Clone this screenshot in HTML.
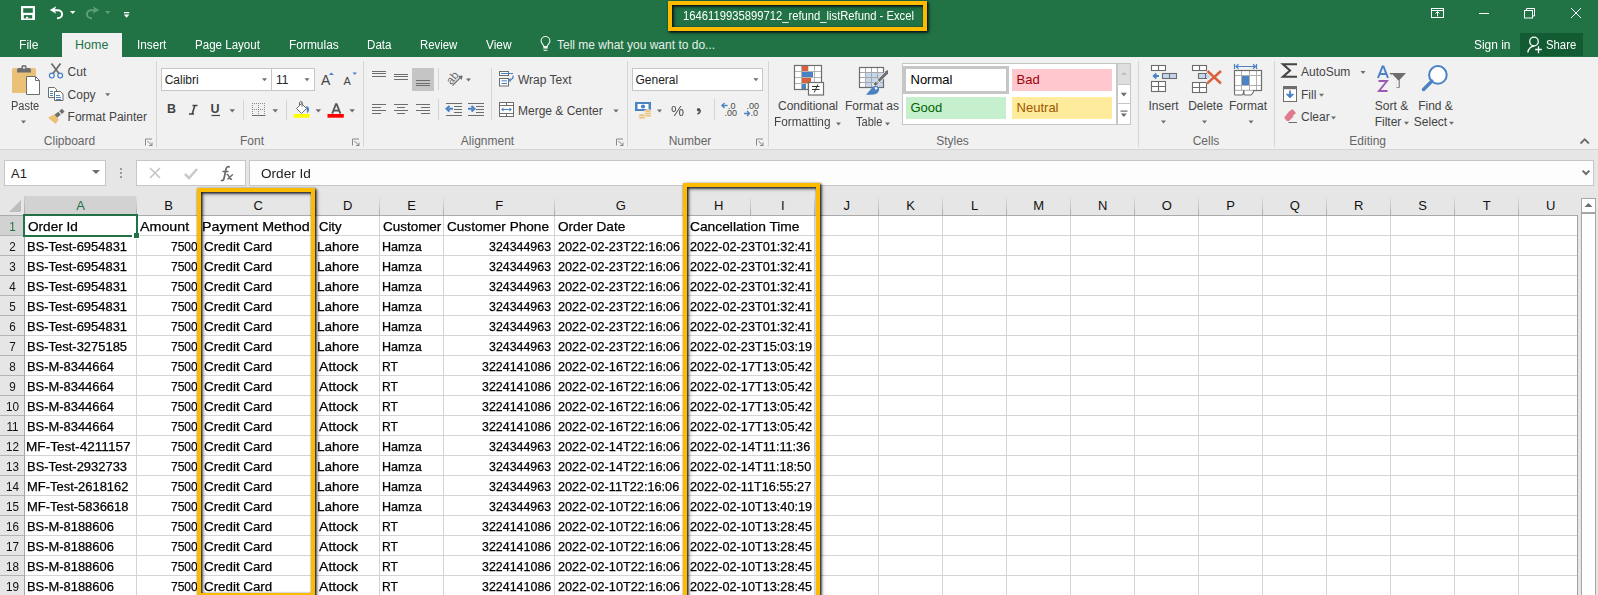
<!DOCTYPE html><html><head><meta charset="utf-8"><style>
*{box-sizing:border-box;margin:0;padding:0}
html,body{width:1598px;height:595px;overflow:hidden;background:#e6e6e6;font-family:"Liberation Sans",sans-serif;position:relative}
.a{position:absolute}
.t{position:absolute;white-space:nowrap;line-height:1;transform-origin:0 0}
.gv{position:absolute;width:1px;background:#d4d4d4}
.gh{position:absolute;height:1px;background:#d4d4d4}
.rb{font-size:12px;color:#444}
</style></head><body><div class="a" style="left:0;top:0;width:1598px;height:57px;background:#217346"></div>
<div class="a" style="left:62px;top:33px;width:60px;height:25px;background:#f1f1f1"></div>
<svg class="a" style="left:0;top:0" width="140" height="30" viewBox="0 0 140 30">
<rect x="21" y="6" width="14" height="14" rx="0.6" fill="#fff"/>
<rect x="23.2" y="8.2" width="9.6" height="4.6" fill="#217346"/>
<rect x="23.8" y="15.1" width="8.4" height="3.3" fill="#217346"/>
<rect x="26" y="16.8" width="2.2" height="1.6" fill="#fff"/>
<path d="M49.8 10l6.4-3.8-1.6 3.8 1.6 3.8z" fill="#fff"/>
<path d="M54 10.2h3.5a4.6 4 0 0 1 0 8h-0.5" fill="none" stroke="#fff" stroke-width="2"/>
<path d="M70 11h5.4l-2.7 3z" fill="#fff"/>
<path d="M99.2 10l-6.4-3.8 1.6 3.8-1.6 3.8z" fill="#5e9e7b"/>
<path d="M95 10.2h-3.5a4.6 4 0 0 0 0 8h0.5" fill="none" stroke="#5e9e7b" stroke-width="2"/>
<path d="M105 11h5.4l-2.7 3z" fill="#5e9e7b"/>
<rect x="124" y="12" width="5.2" height="1.3" fill="#fff"/>
<path d="M123.8 14.4h5.6l-2.8 3.4z" fill="#fff"/>
</svg>
<div class="t" style="left:683.00px;top:10.22px;font-size:12.5px;color:#fff;font-weight:normal;transform:scaleX(0.8990);">1646119935899712_refund_listRefund - Excel</div>
<svg class="a" style="left:1420px;top:0" width="178" height="30" viewBox="0 0 178 30">
<g fill="none" stroke="#fff" stroke-width="1">
<rect x="11.5" y="8.5" width="12" height="9"/>
<path d="M11.5 10.5h12"/>
<path d="M17.5 16.5v-4.5M15.5 13.5l2-2 2 2"/>
<path d="M59 13.5h10"/>
<rect x="104.5" y="10.5" width="8" height="7.5"/>
<path d="M106.5 10.5v-2h8v7.5h-2"/>
<path d="M151 8l10 10M161 8l-10 10"/>
</g></svg>
<div class="t" style="left:19.00px;top:39.42px;font-size:12.5px;color:#fff;font-weight:normal;transform:scaleX(0.9700);">File</div>
<div class="t" style="left:75.00px;top:38.72px;font-size:12.5px;color:#217346;font-weight:normal;">Home</div>
<div class="t" style="left:137.00px;top:38.72px;font-size:12.5px;color:#fff;font-weight:normal;transform:scaleX(0.9400);">Insert</div>
<div class="t" style="left:195.00px;top:38.72px;font-size:12.5px;color:#fff;font-weight:normal;transform:scaleX(0.9250);">Page Layout</div>
<div class="t" style="left:289.00px;top:38.72px;font-size:12.5px;color:#fff;font-weight:normal;transform:scaleX(0.9550);">Formulas</div>
<div class="t" style="left:367.00px;top:38.72px;font-size:12.5px;color:#fff;font-weight:normal;transform:scaleX(0.9300);">Data</div>
<div class="t" style="left:420.00px;top:38.72px;font-size:12.5px;color:#fff;font-weight:normal;transform:scaleX(0.9100);">Review</div>
<div class="t" style="left:486.00px;top:38.72px;font-size:12.5px;color:#fff;font-weight:normal;transform:scaleX(0.9500);">View</div>
<svg class="a" style="left:539px;top:36px" width="14" height="16" viewBox="0 0 14 16"><g fill="none" stroke="#eef4f0" stroke-width="1.1"><path d="M4.8 10.5c0-2-2.7-3-2.7-5.6a4.4 4.4 0 0 1 8.8 0c0 2.6-2.7 3.6-2.7 5.6z"/></g><rect x="4.3" y="10.6" width="4.4" height="2" fill="#eef4f0"/><rect x="4.6" y="13.8" width="3.8" height="1.1" fill="#eef4f0"/></svg>
<div class="t" style="left:557.00px;top:38.84px;font-size:12px;color:#e6efe9;font-weight:normal;">Tell me what you want to do...</div>
<div class="t" style="left:1474.00px;top:38.72px;font-size:12.5px;color:#fff;font-weight:normal;transform:scaleX(0.9550);">Sign in</div>
<div class="a" style="left:1520px;top:33px;width:63px;height:23px;background:#135c33"></div>
<svg class="a" style="left:1525px;top:35px" width="18" height="20" viewBox="0 0 18 20"><g fill="none" stroke="#fff" stroke-width="1.3"><circle cx="9" cy="6.5" r="4.3"/><path d="M2.8 17.5c0.6-3.5 3-6 6.5-6.3"/><path d="M10.2 14.5h6.6M13.5 11.3v7"/></g></svg>
<div class="t" style="left:1546.00px;top:38.72px;font-size:12.5px;color:#fff;font-weight:normal;transform:scaleX(0.9050);">Share</div>
<div class="a" style="left:0;top:57px;width:1598px;height:92px;background:#f1f1f1"></div>
<div class="a" style="left:0;top:149px;width:1598px;height:1px;background:#d5d5d5"></div>
<div class="a" style="left:156px;top:61px;width:1px;height:86px;background:#d5d5d5"></div>
<div class="a" style="left:363px;top:61px;width:1px;height:86px;background:#d5d5d5"></div>
<div class="a" style="left:627px;top:61px;width:1px;height:86px;background:#d5d5d5"></div>
<div class="a" style="left:768px;top:61px;width:1px;height:86px;background:#d5d5d5"></div>
<div class="a" style="left:1138px;top:61px;width:1px;height:86px;background:#d5d5d5"></div>
<div class="a" style="left:1274px;top:61px;width:1px;height:86px;background:#d5d5d5"></div>
<div class="t" style="left:9.5px;width:120px;text-align:center;top:134.84px;font-size:12px;color:#666">Clipboard</div>
<div class="t" style="left:192px;width:120px;text-align:center;top:134.84px;font-size:12px;color:#666">Font</div>
<div class="t" style="left:427.5px;width:120px;text-align:center;top:134.84px;font-size:12px;color:#666">Alignment</div>
<div class="t" style="left:630px;width:120px;text-align:center;top:134.84px;font-size:12px;color:#666">Number</div>
<div class="t" style="left:892.5px;width:120px;text-align:center;top:134.84px;font-size:12px;color:#666">Styles</div>
<div class="t" style="left:1146px;width:120px;text-align:center;top:134.84px;font-size:12px;color:#666">Cells</div>
<div class="t" style="left:1307.7px;width:120px;text-align:center;top:134.84px;font-size:12px;color:#666">Editing</div>
<svg class="a" style="left:0;top:0" width="1598" height="150" viewBox="0 0 1598 150"><rect x="12" y="68" width="24" height="25" rx="1.5" fill="#ebc178"/><path d="M17 72.5v-2.5a2 2 0 0 1 2-2h2.5v-1.5a1.2 1.2 0 0 1 1.2-1.2h2.6a1.2 1.2 0 0 1 1.2 1.2v1.5h2.5a2 2 0 0 1 2 2v2.5z" fill="#6d6d6d"/><rect x="23" y="66.8" width="2.2" height="1.8" fill="#f1f1f1"/><path d="M26.5 76.5h9l4 4v14h-13z" fill="#fff" stroke="#6d6d6d" stroke-width="1"/><path d="M35.5 76.5v4h4" fill="none" stroke="#6d6d6d" stroke-width="1"/><path d="M21 120.5h5l-2.5 3.0z" fill="#6d6d6d"/><path d="M105.2 93.2h5l-2.5 3.0z" fill="#6d6d6d"/><path d="M51.5 63.5l7.5 10M60.5 63.5l-7.5 10" stroke="#6d6d6d" stroke-width="1.8" fill="none"/><circle cx="51.8" cy="75.6" r="2.4" fill="none" stroke="#4b82c4" stroke-width="1.2"/><circle cx="60.2" cy="75.6" r="2.4" fill="none" stroke="#4b82c4" stroke-width="1.2"/><path d="M48.5 87.5h6l2 2v8h-8z" fill="#fff" stroke="#6d6d6d"/><path d="M54.5 91.5h6l2.5 2.5v6.5h-8.5z" fill="#fff" stroke="#6d6d6d"/><path d="M50 91.5h3M50 93.5h3M50 95.5h3M56 95.5h4M56 97.5h5M56 99.5h5" stroke="#4b82c4" stroke-width="1"/><path d="M55.5 116.5l4-3.2M60.5 112.5l2.8-2.2" stroke="#6d6d6d" stroke-width="4" fill="none"/><path d="M48 117.8l6.3-3.6 4.6 5.3-3.2 4.6z" fill="#ebc178"/><rect x="161.5" y="68.5" width="110" height="22" fill="#fff" stroke="#c6c6c6"/><rect x="271.5" y="68.5" width="43" height="22" fill="#fff" stroke="#c6c6c6"/><path d="M262 78.2h5l-2.5 3.0z" fill="#6d6d6d"/><path d="M304.5 78.2h5l-2.5 3.0z" fill="#6d6d6d"/><path d="M328.8 75h5.2l-2.6-2.6z" fill="#4b82c4"/><path d="M352.5 72.5h4.4l-2.2 2.6z" fill="#4b82c4"/><path d="M243.5 99.5v21M286.5 99.5v21" stroke="#d5d5d5"/><path d="M229.5 109.2h5.5l-2.75 3.3z" fill="#6d6d6d"/><path d="M272.5 109.2h5.5l-2.75 3.3z" fill="#6d6d6d"/><path d="M315.6 109.2h5.5l-2.75 3.3z" fill="#6d6d6d"/><path d="M349.4 109.2h5.5l-2.75 3.3z" fill="#6d6d6d"/><path d="M211.5 115.5h8.5" stroke="#444" stroke-width="1.2"/><rect x="252" y="103" width="1" height="1" fill="#8a8a8a"/><rect x="252" y="109" width="1" height="1" fill="#8a8a8a"/><rect x="254" y="103" width="1" height="1" fill="#8a8a8a"/><rect x="254" y="109" width="1" height="1" fill="#8a8a8a"/><rect x="256" y="103" width="1" height="1" fill="#8a8a8a"/><rect x="256" y="109" width="1" height="1" fill="#8a8a8a"/><rect x="258" y="103" width="1" height="1" fill="#8a8a8a"/><rect x="258" y="109" width="1" height="1" fill="#8a8a8a"/><rect x="260" y="103" width="1" height="1" fill="#8a8a8a"/><rect x="260" y="109" width="1" height="1" fill="#8a8a8a"/><rect x="262" y="103" width="1" height="1" fill="#8a8a8a"/><rect x="262" y="109" width="1" height="1" fill="#8a8a8a"/><rect x="264" y="103" width="1" height="1" fill="#8a8a8a"/><rect x="264" y="109" width="1" height="1" fill="#8a8a8a"/><rect x="252" y="103" width="1" height="1" fill="#8a8a8a"/><rect x="258" y="103" width="1" height="1" fill="#8a8a8a"/><rect x="264" y="103" width="1" height="1" fill="#8a8a8a"/><rect x="252" y="105" width="1" height="1" fill="#8a8a8a"/><rect x="258" y="105" width="1" height="1" fill="#8a8a8a"/><rect x="264" y="105" width="1" height="1" fill="#8a8a8a"/><rect x="252" y="107" width="1" height="1" fill="#8a8a8a"/><rect x="258" y="107" width="1" height="1" fill="#8a8a8a"/><rect x="264" y="107" width="1" height="1" fill="#8a8a8a"/><rect x="252" y="109" width="1" height="1" fill="#8a8a8a"/><rect x="258" y="109" width="1" height="1" fill="#8a8a8a"/><rect x="264" y="109" width="1" height="1" fill="#8a8a8a"/><rect x="252" y="111" width="1" height="1" fill="#8a8a8a"/><rect x="258" y="111" width="1" height="1" fill="#8a8a8a"/><rect x="264" y="111" width="1" height="1" fill="#8a8a8a"/><rect x="252" y="113" width="1" height="1" fill="#8a8a8a"/><rect x="258" y="113" width="1" height="1" fill="#8a8a8a"/><rect x="264" y="113" width="1" height="1" fill="#8a8a8a"/><path d="M252 115.5h13.5" stroke="#6d6d6d" stroke-width="1"/><path d="M296.5 108.5l5-5 5 5-5 5z" fill="#fff" stroke="#6d6d6d" stroke-width="1"/><path d="M299.5 106v-3a1.4 1.4 0 0 1 2.8 0l0.3 0.6M302 103.2v3.6" fill="none" stroke="#6d6d6d" stroke-width="1"/><path d="M306.2 106c2.6 0.4 4.4 3.2 1.2 7.4l-0.6-3z" fill="#4b82c4"/><rect x="293.7" y="114" width="16" height="3.7" fill="#ffff00"/><rect x="327.5" y="114" width="16.3" height="3.7" fill="#ff0000"/><rect x="372" y="71" width="14" height="1" fill="#6d6d6d"/><rect x="372" y="73" width="14" height="1" fill="#6d6d6d"/><rect x="372" y="76" width="14" height="1" fill="#6d6d6d"/><rect x="394" y="74" width="14" height="1" fill="#6d6d6d"/><rect x="394" y="76" width="14" height="1" fill="#6d6d6d"/><rect x="394" y="79" width="14" height="1" fill="#6d6d6d"/><rect x="412" y="68" width="22" height="23" fill="#c5c5c5"/><rect x="416" y="80" width="14" height="1" fill="#6d6d6d"/><rect x="416" y="83" width="14" height="1" fill="#6d6d6d"/><rect x="416" y="85" width="14" height="1" fill="#6d6d6d"/><rect x="372" y="104" width="14" height="1" fill="#6d6d6d"/><rect x="372" y="107" width="9" height="1" fill="#6d6d6d"/><rect x="372" y="110" width="14" height="1" fill="#6d6d6d"/><rect x="372" y="113" width="9" height="1" fill="#6d6d6d"/><rect x="394" y="104" width="14" height="1" fill="#6d6d6d"/><rect x="397" y="107" width="8" height="1" fill="#6d6d6d"/><rect x="394" y="110" width="14" height="1" fill="#6d6d6d"/><rect x="397" y="113" width="8" height="1" fill="#6d6d6d"/><rect x="416" y="104" width="14" height="1" fill="#6d6d6d"/><rect x="421" y="107" width="9" height="1" fill="#6d6d6d"/><rect x="416" y="110" width="14" height="1" fill="#6d6d6d"/><rect x="421" y="113" width="9" height="1" fill="#6d6d6d"/><path d="M438.5 68v22M438.5 99v21M491.5 68v52" stroke="#d5d5d5"/><text x="446" y="82" font-size="11.5" fill="#6d6d6d" font-family="Liberation Sans" transform="rotate(-50 452 78)">ab</text><path d="M452.5 85.5l9-9" stroke="#6d6d6d" stroke-width="1.1" fill="none"/><path d="M462.5 75.5l-4.5 0.6 3.9 3.9z" fill="#6d6d6d"/><path d="M466 78.5h5l-2.5 3.0z" fill="#6d6d6d"/><rect x="446" y="103" width="16" height="1" fill="#6d6d6d"/><rect x="446" y="115" width="16" height="1" fill="#6d6d6d"/><rect x="454" y="106" width="8" height="1" fill="#6d6d6d"/><rect x="454" y="109" width="8" height="1" fill="#6d6d6d"/><rect x="454" y="112" width="8" height="1" fill="#6d6d6d"/><path d="M453 108.8h-4.5M449.5 106l-3 2.8 3 2.8" stroke="#4b82c4" stroke-width="2" fill="none"/><rect x="468" y="103" width="16" height="1" fill="#6d6d6d"/><rect x="468" y="115" width="16" height="1" fill="#6d6d6d"/><rect x="476" y="106" width="8" height="1" fill="#6d6d6d"/><rect x="476" y="109" width="8" height="1" fill="#6d6d6d"/><rect x="476" y="112" width="8" height="1" fill="#6d6d6d"/><path d="M468 108.8h4.5M471.5 106l3 2.8-3 2.8" stroke="#4b82c4" stroke-width="2" fill="none"/><rect x="499.5" y="71.5" width="9" height="4" fill="#fff" stroke="#6d6d6d"/><rect x="499.5" y="78.5" width="9" height="7.5" fill="#fff" stroke="#6d6d6d"/><path d="M501 73.5h12M501.5 80.8h5.5M501.5 83.5h5.5" stroke="#4b82c4" stroke-width="1" fill="none"/><path d="M513 75.5c0.5 2.5-1 4.5-4 4.8" stroke="#4b82c4" stroke-width="1.2" fill="none"/><path d="M508 80.3l2.6-2.2v4.2z" fill="#4b82c4"/><rect x="499.5" y="102.5" width="14" height="14" fill="#fff" stroke="#6d6d6d"/><path d="M499.5 105.5h14M499.5 113.5h14M506.5 102.5v3M506.5 113.5v3" stroke="#6d6d6d" fill="none"/><path d="M502 109.5h9" stroke="#4b82c4" stroke-width="1" fill="none"/><path d="M501 109.5l2.5-2v4zM512 109.5l-2.5-2v4z" fill="#4b82c4"/><path d="M613.4 109.5h5.2l-2.6 3.12z" fill="#6d6d6d"/><rect x="632.5" y="68.5" width="130" height="22" fill="#fff" stroke="#c6c6c6"/><path d="M753.4 78.2h5l-2.5 3.0z" fill="#6d6d6d"/><rect x="635" y="102" width="16" height="9" fill="#4b82c4"/><path d="M637.5 104h11v5h-11z" fill="#fff"/><circle cx="643" cy="106.5" r="2.1" fill="#4b82c4"/><g fill="#ebc178" stroke="#f1f1f1" stroke-width="0.7"><ellipse cx="648" cy="115.5" rx="3.3" ry="1.5"/><ellipse cx="648" cy="113.3" rx="3.3" ry="1.5"/><ellipse cx="648" cy="111" rx="3.3" ry="1.5"/><ellipse cx="642" cy="117.6" rx="3.3" ry="1.5"/><ellipse cx="642" cy="115.3" rx="3.3" ry="1.5"/></g><path d="M657 109.5h5l-2.5 3.0z" fill="#6d6d6d"/><path d="M714.5 99v21" stroke="#d5d5d5"/><path d="M722 105.5h5.5M724.5 103l-2.5 2.5 2.5 2.5M744 113.5h5.5M747 111l2.5 2.5-2.5 2.5" stroke="#4b82c4" stroke-width="1.4" fill="none"/><text x="728" y="109" font-size="9" fill="#4a4a4a" font-family="Liberation Sans">.0</text><text x="724.5" y="116" font-size="9" fill="#4a4a4a" font-family="Liberation Sans">.00</text><text x="746.5" y="109" font-size="9" fill="#4a4a4a" font-family="Liberation Sans">.00</text><text x="750.5" y="116" font-size="9" fill="#4a4a4a" font-family="Liberation Sans">.0</text><rect x="794.5" y="65.5" width="27" height="24" fill="#fff"/><path d="M801.5 65.5v24M808 65.5v24M814.5 65.5v24M794.5 71.5h27M794.5 77.5h27M794.5 83.5h27" stroke="#b4b4b4" stroke-width="1" fill="none"/><rect x="802" y="66" width="6" height="5" fill="#d9603b"/><rect x="802" y="72" width="11" height="5" fill="#4b82c4"/><rect x="802" y="78" width="9" height="5" fill="#d9603b"/><rect x="802" y="84" width="4" height="5" fill="#4b82c4"/><rect x="794.5" y="65.5" width="27" height="24" fill="none" stroke="#6d6d6d" stroke-width="1.2"/><rect x="808.5" y="82.5" width="15" height="12.5" fill="#fff" stroke="#6d6d6d" stroke-width="1.2"/><path d="M812 86.5h7.5M812 89.5h7.5M817.8 84.5l-3.6 8" stroke="#333" stroke-width="1" fill="none"/><rect x="859.5" y="67.5" width="24" height="20" fill="#fff"/><rect x="865.5" y="72.5" width="18" height="15" fill="#c5d7ee"/><path d="M865.5 67.5v20M871.5 67.5v20M877.5 67.5v20M859.5 72.5h24M859.5 77.5h24M859.5 82.5h24" stroke="#a8a8a8" stroke-width="1" fill="none"/><rect x="859.5" y="67.5" width="24" height="20" fill="none" stroke="#6d6d6d" stroke-width="1.2"/><path d="M873.5 86l3-3M878 81.5l9-9" stroke="#f1f1f1" stroke-width="4.5" fill="none"/><path d="M874.5 85l2.2-2.2M878.5 81l8.5-8.5" stroke="#6d6d6d" stroke-width="3" fill="none"/><path d="M885 71.5l3-1.5v4.5z" fill="#6d6d6d"/><path d="M866 94.8l6.5-7.5c1.6-1.8 4.4-1.8 5.8 0 1.4 1.6 1 4-0.8 5.6-2.4 2-6 2-11.5 1.9z" fill="#4b82c4"/><path d="M874.5 87.8c1.2-0.8 2.6-0.4 3 0.6l-1.6 1.6z" fill="#fff"/><rect x="902.5" y="63.5" width="214" height="61" fill="#fff" stroke="#c6c6c6"/><rect x="904.5" y="67.5" width="103" height="25" fill="#fff" stroke="#c6c6c6" stroke-width="3"/><rect x="1012" y="69" width="100" height="22" fill="#ffc7ce"/><rect x="906" y="97" width="100" height="22" fill="#c6efce"/><rect x="1012" y="97" width="100" height="22" fill="#ffeb9c"/><rect x="1117.5" y="63.5" width="13" height="61" fill="#fff" stroke="#c6c6c6"/><rect x="1118" y="64" width="12" height="20" fill="#dedede"/><path d="M1117.5 84.5h13M1117.5 103.5h13" stroke="#c6c6c6"/><path d="M1120.8 75h6.2l-3.1-3z" fill="#c0c0c0"/><path d="M1120.8 92.8h6l-3.0 3.5999999999999996z" fill="#6d6d6d"/><rect x="1120.5" y="110.5" width="7" height="1.2" fill="#6d6d6d"/><path d="M1120.8 113.5h6l-3.0 3.5999999999999996z" fill="#6d6d6d"/><path d="M1138.5 61v86M1274.5 61v86" stroke="#d5d5d5"/><g fill="#fff" stroke="#6d6d6d" stroke-width="1.1"><rect x="1151.5" y="65.5" width="14" height="5"/><rect x="1151.5" y="81.5" width="14" height="10"/></g><path d="M1158.5 65.5v5M1151.5 86.5h14M1158.5 81.5v10" stroke="#6d6d6d" stroke-width="1.1" fill="none"/><rect x="1162.5" y="73.5" width="14" height="5" fill="#c5d7ee" stroke="#6d6d6d" stroke-width="1.1"/><path d="M1169.5 73.5v5" stroke="#6d6d6d" stroke-width="1.1"/><path d="M1154 76h5M1156.3 73.5l-2.6 2.5 2.6 2.5" stroke="#4b82c4" stroke-width="1.8" fill="none"/><path d="M1161 120.5h5l-2.5 3.0z" fill="#6d6d6d"/><g fill="#fff" stroke="#6d6d6d" stroke-width="1.1"><rect x="1192.5" y="65.5" width="14" height="5"/><rect x="1192.5" y="82.5" width="14" height="10"/></g><path d="M1199.5 65.5v5M1192.5 87.5h14M1199.5 82.5v10" stroke="#6d6d6d" stroke-width="1.1" fill="none"/><path d="M1198.5 73.5h11l1.5 2.5-1.5 2.5h-11z" fill="#c5d7ee"/><path d="M1207 73.5h-8.5v5h8.5M1205.5 73.5v5" stroke="#6d6d6d" stroke-width="1.1" fill="none"/><path d="M1207.5 71l13.5 12.5M1221 71l-14 12.5" stroke="#f1f1f1" stroke-width="4" fill="none"/><path d="M1207.5 71l13.5 12.5M1221 71l-14 12.5" stroke="#d9603b" stroke-width="2.4" fill="none"/><path d="M1202 120.5h5l-2.5 3.0z" fill="#6d6d6d"/><path d="M1234.5 64v5M1256.5 64v5M1236 66.5h19.5M1238.5 64.2l-2.5 2.3 2.5 2.3M1253 64.2l2.5 2.3-2.5 2.3" stroke="#4b82c4" stroke-width="1.2" fill="none"/><rect x="1234.5" y="70.5" width="27" height="20" fill="#fff"/><path d="M1241.5 70.5v20M1249.5 70.5v20M1256.5 70.5v20M1234.5 75.5h27M1234.5 85.5h27" stroke="#b0b0b0" stroke-width="1" fill="none"/><rect x="1242" y="76" width="7" height="9" fill="#4b82c4"/><rect x="1234.5" y="70.5" width="27" height="20" fill="none" stroke="#6d6d6d" stroke-width="1.2"/><path d="M1234.5 90.5v3.5a1 1 0 0 0 1 1h6.5l1.5-1.5v-3M1244 90.5v3.5a1 1 0 0 0 1 1h6l2.5-3v-1.5" stroke="#6d6d6d" stroke-width="1.1" fill="#fff"/><path d="M1248.5 120.5h5l-2.5 3.0z" fill="#6d6d6d"/><path d="M1297 64.2h-14l7 6.3-7 6.3h14" stroke="#444" stroke-width="2.1" fill="none" stroke-linejoin="miter"/><path d="M1360.5 71h5l-2.5 3.0z" fill="#6d6d6d"/><rect x="1283.5" y="86.5" width="13" height="15" fill="#fff" stroke="#6d6d6d"/><rect x="1283" y="86" width="14" height="3.2" fill="#6d6d6d"/><path d="M1290 90.5v5" stroke="#4b82c4" stroke-width="1.8" fill="none"/><path d="M1286.3 94.2h7.4l-3.7 3.8z" fill="#4b82c4" stroke="#4b82c4" stroke-width="0.8" stroke-linejoin="round"/><path d="M1319 93.8h5l-2.5 3.0z" fill="#6d6d6d"/><path d="M1289 111.5l3.5-2.5 3.5 4-6 5.5z" fill="#e07b8e"/><path d="M1284.2 117.5l4.8-6 4.5 5-4.5 4.5h-2.2z" fill="#e07b8e"/><path d="M1288.5 122.5h8.5" stroke="#6d6d6d" stroke-width="1"/><path d="M1331 116.5h5l-2.5 3.0z" fill="#6d6d6d"/><path d="M1378 78l4.5-11.5h1l4.5 11.5M1379.6 74h6.8" stroke="#4b82c4" stroke-width="2" fill="none"/><path d="M1378.5 81h8.5l-8 10h8.5" stroke="#9b59b6" stroke-width="1.9" fill="none" stroke-linejoin="miter"/><path d="M1389.2 73h16.8l-6.3 6.7v8h-3.2v-8z" fill="#6d6d6d"/><path d="M1391.6 74.3l5.4 5.6v6.6h1v-6.2" stroke="#fff" stroke-width="1.2" fill="none"/><path d="M1404 121.8h5l-2.5 3.0z" fill="#6d6d6d"/><circle cx="1437.9" cy="74.9" r="8.8" fill="#fff" stroke="#4b82c4" stroke-width="2"/><path d="M1431.8 81.2l-8.3 8.3" stroke="#4b82c4" stroke-width="3.5" stroke-linecap="round"/><path d="M1449 121.8h5l-2.5 3.0z" fill="#6d6d6d"/><path d="M1580.5 143.5l4.2-4.2 4.2 4.2" stroke="#6d6d6d" stroke-width="1.8" fill="none"/><path d="M145.5 145.5v-6.5h6.5M147.5 141l4.5 4.5M149 145.5h3v-3" stroke="#888" stroke-width="1" fill="none"/><path d="M352.5 145.5v-6.5h6.5M354.5 141l4.5 4.5M356 145.5h3v-3" stroke="#888" stroke-width="1" fill="none"/><path d="M616.5 145.5v-6.5h6.5M618.5 141l4.5 4.5M620 145.5h3v-3" stroke="#888" stroke-width="1" fill="none"/><path d="M756.5 145.5v-6.5h6.5M758.5 141l4.5 4.5M760 145.5h3v-3" stroke="#888" stroke-width="1" fill="none"/></svg>
<div class="t" style="left:67.60px;top:65.84px;font-size:12px;color:#444;font-weight:normal;">Cut</div>
<div class="t" style="left:67.60px;top:88.84px;font-size:12px;color:#444;font-weight:normal;">Copy</div>
<div class="t" style="left:67.60px;top:110.84px;font-size:12px;color:#444;font-weight:normal;">Format Painter</div>
<div class="t" style="left:518.00px;top:73.84px;font-size:12px;color:#444;font-weight:normal;">Wrap Text</div>
<div class="t" style="left:518.00px;top:104.84px;font-size:12px;color:#444;font-weight:normal;">Merge &amp; Center</div>
<div class="t" style="left:1301.00px;top:65.84px;font-size:12px;color:#444;font-weight:normal;">AutoSum</div>
<div class="t" style="left:1301.00px;top:88.84px;font-size:12px;color:#444;font-weight:normal;">Fill</div>
<div class="t" style="left:1301.00px;top:111.34px;font-size:12px;color:#444;font-weight:normal;">Clear</div>
<div class="t" style="left:104.00px;top:88.84px;font-size:12px;color:#444;font-weight:normal;"></div>
<div class="t" style="left:10.60px;top:99.84px;font-size:12px;color:#444;font-weight:normal;transform:scaleX(0.9200);">Paste</div>
<svg class="a" style="left:0;top:0" width="1598" height="150"><path d="M836 122.5h5l-2.5 3z" fill="#6d6d6d"/><path d="M885 122.5h5l-2.5 3z" fill="#6d6d6d"/></svg>
<div class="t" style="left:164.70px;top:73.84px;font-size:12px;color:#222;font-weight:normal;">Calibri</div>
<div class="t" style="left:276.00px;top:73.84px;font-size:12px;color:#222;font-weight:normal;">11</div>
<div class="t" style="left:635.50px;top:73.84px;font-size:12px;color:#222;font-weight:normal;">General</div>
<div class="t" style="left:167.00px;top:103.42px;font-size:12.5px;color:#444;font-weight:bold;">B</div>
<svg class="a" style="left:0;top:0" width="1598" height="150"><path d="M192.5 105.5h5M189 114h5M194.8 105.5l-2.6 8.5" stroke="#444" stroke-width="1.6" fill="none"/><path d="M332.2 113.6l3.7-9.4h0.8l3.7 9.4M333.6 110.6h5.4" stroke="#555" stroke-width="1.8" fill="none"/></svg>
<div class="t" style="left:210.50px;top:103.42px;font-size:12.5px;color:#444;font-weight:bold;">U</div>
<div class="t" style="left:321.00px;top:73.15px;font-size:14px;color:#444;font-weight:normal;">A</div>
<div class="t" style="left:343.50px;top:75.69px;font-size:11px;color:#444;font-weight:normal;">A</div>
<div class="t" style="left:671.00px;top:102.88px;font-size:15.5px;color:#555;font-weight:normal;transform:scaleX(0.9500);">%</div>
<svg class="a" style="left:690px;top:100px" width="16" height="20"><circle cx="8.6" cy="9.8" r="1.8" fill="#555"/><path d="M10.2 10c0.2 2-0.8 3.4-2.8 4.2" fill="none" stroke="#555" stroke-width="1.4"/></svg>
<div class="t" style="left:758px;width:100px;text-align:center;top:99.84px;font-size:12px;color:#444">Conditional</div>
<div class="t" style="left:822px;width:100px;text-align:center;top:99.84px;font-size:12px;color:#444">Format as</div>
<div class="t" style="left:1113.5px;width:100px;text-align:center;top:99.84px;font-size:12px;color:#444">Insert</div>
<div class="t" style="left:1155.5px;width:100px;text-align:center;top:99.84px;font-size:12px;color:#444">Delete</div>
<div class="t" style="left:1198px;width:100px;text-align:center;top:99.84px;font-size:12px;color:#444">Format</div>
<div class="t" style="left:1341.5px;width:100px;text-align:center;top:99.84px;font-size:12px;color:#444">Sort &amp;</div>
<div class="t" style="left:1338px;width:100px;text-align:center;top:115.84px;font-size:12px;color:#444">Filter</div>
<div class="t" style="left:1385.5px;width:100px;text-align:center;top:99.84px;font-size:12px;color:#444">Find &amp;</div>
<div class="t" style="left:1380.5px;width:100px;text-align:center;top:115.84px;font-size:12px;color:#444">Select</div>
<div class="t" style="left:774.40px;top:115.84px;font-size:12px;color:#444;font-weight:normal;transform:scaleX(0.9850);">Formatting</div>
<div class="t" style="left:855.80px;top:115.84px;font-size:12px;color:#444;font-weight:normal;transform:scaleX(0.9200);">Table</div>
<div class="t" style="left:910.50px;top:73.00px;font-size:13px;color:#000;font-weight:normal;">Normal</div>
<div class="t" style="left:1016.60px;top:73.00px;font-size:13px;color:#9c0006;font-weight:normal;">Bad</div>
<div class="t" style="left:910.50px;top:101.00px;font-size:13px;color:#006100;font-weight:normal;">Good</div>
<div class="t" style="left:1016.60px;top:101.00px;font-size:13px;color:#9c5700;font-weight:normal;">Neutral</div>
<div class="a" style="left:4px;top:160px;width:102px;height:26px;background:#fff;border:1px solid #c6c6c6"></div>
<div class="t" style="left:11.00px;top:167.00px;font-size:13px;color:#222;font-weight:normal;">A1</div>
<svg class="a" style="left:91px;top:169px" width="10" height="6"><path d="M1 1h8l-4 4z" fill="#6d6d6d"/></svg>
<svg class="a" style="left:119px;top:164px" width="4" height="18"><g fill="#9a9a9a"><rect x="1" y="4" width="2" height="2"/><rect x="1" y="8" width="2" height="2"/><rect x="1" y="12" width="2" height="2"/></g></svg>
<div class="a" style="left:136px;top:160px;width:110px;height:26px;background:#fff;border:1px solid #c6c6c6"></div>
<svg class="a" style="left:136px;top:160px" width="110" height="26"><g fill="none" stroke="#c6c6c6" stroke-width="1.7"><path d="M14 8l10 10M24 8l-10 10"/></g><path d="M49 14l4 4 8-9" fill="none" stroke="#cacaca" stroke-width="2.6"/></svg>
<svg class="a" style="left:215px;top:161.5px" width="25" height="24"><g fill="none" stroke="#6a6a6a" stroke-linecap="round"><path d="M6.5 18.5c1.6 0.3 2.2-0.6 2.6-2.5l1.9-9c0.4-1.8 1.4-2.6 3.2-2.2" stroke-width="1.7"/><path d="M8 9.5h5" stroke-width="1.4"/><path d="M12 12.5c1 0 1.4 0.6 1.8 1.6l1 2c0.4 0.9 0.9 1.2 1.8 1.1M17.5 12.8c-1.2 0.4-2.6 2.4-4.5 4.2" stroke-width="1.4"/></g></svg>
<div class="a" style="left:249px;top:160px;width:1345px;height:26px;background:#fdfdfd;border:1px solid #c6c6c6"></div>
<div class="t" style="left:261.00px;top:167.00px;font-size:13px;color:#222;font-weight:normal;transform:scaleX(1.0473);">Order Id</div>
<svg class="a" style="left:1580px;top:168px" width="12" height="10"><path d="M2.6 2.6l3.4 3.4 3.4-3.4" fill="none" stroke="#6d6d6d" stroke-width="2"/></svg>
<div class="a" style="left:0;top:196px;width:1578px;height:20px;background:#e6e6e6"></div>
<svg class="a" style="left:0;top:196px" width="24" height="20"><path d="M21 4v12h-12z" fill="#bdbdbd"/></svg>
<div class="a" style="left:24px;top:196px;width:112px;height:19px;background:#d2d2d2"></div>
<div class="a" style="left:136px;top:196px;width:1px;height:19px;background:linear-gradient(#e6e6e6,#ababab)"></div>
<div class="a" style="left:200px;top:196px;width:1px;height:19px;background:linear-gradient(#e6e6e6,#ababab)"></div>
<div class="a" style="left:315px;top:196px;width:1px;height:19px;background:linear-gradient(#e6e6e6,#ababab)"></div>
<div class="a" style="left:379px;top:196px;width:1px;height:19px;background:linear-gradient(#e6e6e6,#ababab)"></div>
<div class="a" style="left:443px;top:196px;width:1px;height:19px;background:linear-gradient(#e6e6e6,#ababab)"></div>
<div class="a" style="left:554px;top:196px;width:1px;height:19px;background:linear-gradient(#e6e6e6,#ababab)"></div>
<div class="a" style="left:686px;top:196px;width:1px;height:19px;background:linear-gradient(#e6e6e6,#ababab)"></div>
<div class="a" style="left:750px;top:196px;width:1px;height:19px;background:linear-gradient(#e6e6e6,#ababab)"></div>
<div class="a" style="left:814px;top:196px;width:1px;height:19px;background:linear-gradient(#e6e6e6,#ababab)"></div>
<div class="a" style="left:878px;top:196px;width:1px;height:19px;background:linear-gradient(#e6e6e6,#ababab)"></div>
<div class="a" style="left:942px;top:196px;width:1px;height:19px;background:linear-gradient(#e6e6e6,#ababab)"></div>
<div class="a" style="left:1006px;top:196px;width:1px;height:19px;background:linear-gradient(#e6e6e6,#ababab)"></div>
<div class="a" style="left:1070px;top:196px;width:1px;height:19px;background:linear-gradient(#e6e6e6,#ababab)"></div>
<div class="a" style="left:1134px;top:196px;width:1px;height:19px;background:linear-gradient(#e6e6e6,#ababab)"></div>
<div class="a" style="left:1198px;top:196px;width:1px;height:19px;background:linear-gradient(#e6e6e6,#ababab)"></div>
<div class="a" style="left:1262px;top:196px;width:1px;height:19px;background:linear-gradient(#e6e6e6,#ababab)"></div>
<div class="a" style="left:1326px;top:196px;width:1px;height:19px;background:linear-gradient(#e6e6e6,#ababab)"></div>
<div class="a" style="left:1390px;top:196px;width:1px;height:19px;background:linear-gradient(#e6e6e6,#ababab)"></div>
<div class="a" style="left:1454px;top:196px;width:1px;height:19px;background:linear-gradient(#e6e6e6,#ababab)"></div>
<div class="a" style="left:1518px;top:196px;width:1px;height:19px;background:linear-gradient(#e6e6e6,#ababab)"></div>
<div class="a" style="left:24px;top:196px;width:1px;height:19px;background:linear-gradient(#cfcfcf,#a8a8a8)"></div>
<div class="a" style="left:0px;top:215px;width:1578px;height:1px;background:#ababab"></div>
<div class="t" style="left:60.7px;width:40px;text-align:center;top:199.00px;font-size:13px;color:#217346">A</div>
<div class="t" style="left:148.7px;width:40px;text-align:center;top:199.00px;font-size:13px;color:#111">B</div>
<div class="t" style="left:238.2px;width:40px;text-align:center;top:199.00px;font-size:13px;color:#111">C</div>
<div class="t" style="left:327.7px;width:40px;text-align:center;top:199.00px;font-size:13px;color:#111">D</div>
<div class="t" style="left:391.7px;width:40px;text-align:center;top:199.00px;font-size:13px;color:#111">E</div>
<div class="t" style="left:479.2px;width:40px;text-align:center;top:199.00px;font-size:13px;color:#111">F</div>
<div class="t" style="left:600.7px;width:40px;text-align:center;top:199.00px;font-size:13px;color:#111">G</div>
<div class="t" style="left:698.7px;width:40px;text-align:center;top:199.00px;font-size:13px;color:#111">H</div>
<div class="t" style="left:762.7px;width:40px;text-align:center;top:199.00px;font-size:13px;color:#111">I</div>
<div class="t" style="left:826.7px;width:40px;text-align:center;top:199.00px;font-size:13px;color:#111">J</div>
<div class="t" style="left:890.7px;width:40px;text-align:center;top:199.00px;font-size:13px;color:#111">K</div>
<div class="t" style="left:954.7px;width:40px;text-align:center;top:199.00px;font-size:13px;color:#111">L</div>
<div class="t" style="left:1018.7px;width:40px;text-align:center;top:199.00px;font-size:13px;color:#111">M</div>
<div class="t" style="left:1082.7px;width:40px;text-align:center;top:199.00px;font-size:13px;color:#111">N</div>
<div class="t" style="left:1146.7px;width:40px;text-align:center;top:199.00px;font-size:13px;color:#111">O</div>
<div class="t" style="left:1210.7px;width:40px;text-align:center;top:199.00px;font-size:13px;color:#111">P</div>
<div class="t" style="left:1274.7px;width:40px;text-align:center;top:199.00px;font-size:13px;color:#111">Q</div>
<div class="t" style="left:1338.7px;width:40px;text-align:center;top:199.00px;font-size:13px;color:#111">R</div>
<div class="t" style="left:1402.7px;width:40px;text-align:center;top:199.00px;font-size:13px;color:#111">S</div>
<div class="t" style="left:1466.7px;width:40px;text-align:center;top:199.00px;font-size:13px;color:#111">T</div>
<div class="t" style="left:1530.7px;width:40px;text-align:center;top:199.00px;font-size:13px;color:#111">U</div>
<div class="a" style="left:0;top:216px;width:24px;height:379px;background:#e6e6e6"></div>
<div class="a" style="left:0;top:216px;width:24px;height:19px;background:#d2d2d2"></div>
<div class="a" style="left:24px;top:215px;width:1px;height:380px;background:#a6a6a6"></div>
<div class="a" style="left:0;top:235px;width:24px;height:1px;background:#b4b4b4"></div>
<div class="t" style="left:0;width:25px;text-align:center;top:220.00px;font-size:13px;color:#217346;transform:scaleX(0.9);transform-origin:12.5px 0">1</div>
<div class="a" style="left:0;top:255px;width:24px;height:1px;background:#b4b4b4"></div>
<div class="t" style="left:0;width:25px;text-align:center;top:240.00px;font-size:13px;color:#111;transform:scaleX(0.9);transform-origin:12.5px 0">2</div>
<div class="a" style="left:0;top:275px;width:24px;height:1px;background:#b4b4b4"></div>
<div class="t" style="left:0;width:25px;text-align:center;top:260.00px;font-size:13px;color:#111;transform:scaleX(0.9);transform-origin:12.5px 0">3</div>
<div class="a" style="left:0;top:295px;width:24px;height:1px;background:#b4b4b4"></div>
<div class="t" style="left:0;width:25px;text-align:center;top:280.00px;font-size:13px;color:#111;transform:scaleX(0.9);transform-origin:12.5px 0">4</div>
<div class="a" style="left:0;top:315px;width:24px;height:1px;background:#b4b4b4"></div>
<div class="t" style="left:0;width:25px;text-align:center;top:300.00px;font-size:13px;color:#111;transform:scaleX(0.9);transform-origin:12.5px 0">5</div>
<div class="a" style="left:0;top:335px;width:24px;height:1px;background:#b4b4b4"></div>
<div class="t" style="left:0;width:25px;text-align:center;top:320.00px;font-size:13px;color:#111;transform:scaleX(0.9);transform-origin:12.5px 0">6</div>
<div class="a" style="left:0;top:355px;width:24px;height:1px;background:#b4b4b4"></div>
<div class="t" style="left:0;width:25px;text-align:center;top:340.00px;font-size:13px;color:#111;transform:scaleX(0.9);transform-origin:12.5px 0">7</div>
<div class="a" style="left:0;top:375px;width:24px;height:1px;background:#b4b4b4"></div>
<div class="t" style="left:0;width:25px;text-align:center;top:360.00px;font-size:13px;color:#111;transform:scaleX(0.9);transform-origin:12.5px 0">8</div>
<div class="a" style="left:0;top:395px;width:24px;height:1px;background:#b4b4b4"></div>
<div class="t" style="left:0;width:25px;text-align:center;top:380.00px;font-size:13px;color:#111;transform:scaleX(0.9);transform-origin:12.5px 0">9</div>
<div class="a" style="left:0;top:415px;width:24px;height:1px;background:#b4b4b4"></div>
<div class="t" style="left:0;width:25px;text-align:center;top:400.00px;font-size:13px;color:#111;transform:scaleX(0.9);transform-origin:12.5px 0">10</div>
<div class="a" style="left:0;top:435px;width:24px;height:1px;background:#b4b4b4"></div>
<div class="t" style="left:0;width:25px;text-align:center;top:420.00px;font-size:13px;color:#111;transform:scaleX(0.9);transform-origin:12.5px 0">11</div>
<div class="a" style="left:0;top:455px;width:24px;height:1px;background:#b4b4b4"></div>
<div class="t" style="left:0;width:25px;text-align:center;top:440.00px;font-size:13px;color:#111;transform:scaleX(0.9);transform-origin:12.5px 0">12</div>
<div class="a" style="left:0;top:475px;width:24px;height:1px;background:#b4b4b4"></div>
<div class="t" style="left:0;width:25px;text-align:center;top:460.00px;font-size:13px;color:#111;transform:scaleX(0.9);transform-origin:12.5px 0">13</div>
<div class="a" style="left:0;top:495px;width:24px;height:1px;background:#b4b4b4"></div>
<div class="t" style="left:0;width:25px;text-align:center;top:480.00px;font-size:13px;color:#111;transform:scaleX(0.9);transform-origin:12.5px 0">14</div>
<div class="a" style="left:0;top:515px;width:24px;height:1px;background:#b4b4b4"></div>
<div class="t" style="left:0;width:25px;text-align:center;top:500.00px;font-size:13px;color:#111;transform:scaleX(0.9);transform-origin:12.5px 0">15</div>
<div class="a" style="left:0;top:535px;width:24px;height:1px;background:#b4b4b4"></div>
<div class="t" style="left:0;width:25px;text-align:center;top:520.00px;font-size:13px;color:#111;transform:scaleX(0.9);transform-origin:12.5px 0">16</div>
<div class="a" style="left:0;top:555px;width:24px;height:1px;background:#b4b4b4"></div>
<div class="t" style="left:0;width:25px;text-align:center;top:540.00px;font-size:13px;color:#111;transform:scaleX(0.9);transform-origin:12.5px 0">17</div>
<div class="a" style="left:0;top:575px;width:24px;height:1px;background:#b4b4b4"></div>
<div class="t" style="left:0;width:25px;text-align:center;top:560.00px;font-size:13px;color:#111;transform:scaleX(0.9);transform-origin:12.5px 0">18</div>
<div class="a" style="left:0;top:595px;width:24px;height:1px;background:#b4b4b4"></div>
<div class="t" style="left:0;width:25px;text-align:center;top:580.00px;font-size:13px;color:#111;transform:scaleX(0.9);transform-origin:12.5px 0">19</div>
<div class="a" style="left:25px;top:216px;width:1552px;height:379px;background:#fff"></div>
<div class="gh" style="left:25px;top:235px;width:1552px"></div>
<div class="gh" style="left:25px;top:255px;width:1552px"></div>
<div class="gh" style="left:25px;top:275px;width:1552px"></div>
<div class="gh" style="left:25px;top:295px;width:1552px"></div>
<div class="gh" style="left:25px;top:315px;width:1552px"></div>
<div class="gh" style="left:25px;top:335px;width:1552px"></div>
<div class="gh" style="left:25px;top:355px;width:1552px"></div>
<div class="gh" style="left:25px;top:375px;width:1552px"></div>
<div class="gh" style="left:25px;top:395px;width:1552px"></div>
<div class="gh" style="left:25px;top:415px;width:1552px"></div>
<div class="gh" style="left:25px;top:435px;width:1552px"></div>
<div class="gh" style="left:25px;top:455px;width:1552px"></div>
<div class="gh" style="left:25px;top:475px;width:1552px"></div>
<div class="gh" style="left:25px;top:495px;width:1552px"></div>
<div class="gh" style="left:25px;top:515px;width:1552px"></div>
<div class="gh" style="left:25px;top:535px;width:1552px"></div>
<div class="gh" style="left:25px;top:555px;width:1552px"></div>
<div class="gh" style="left:25px;top:575px;width:1552px"></div>
<div class="gh" style="left:25px;top:595px;width:1552px"></div>
<div class="gv" style="left:136px;top:216px;height:379px"></div>
<div class="gv" style="left:200px;top:216px;height:379px"></div>
<div class="gv" style="left:315px;top:216px;height:379px"></div>
<div class="gv" style="left:379px;top:216px;height:379px"></div>
<div class="gv" style="left:443px;top:216px;height:379px"></div>
<div class="gv" style="left:554px;top:216px;height:379px"></div>
<div class="gv" style="left:686px;top:216px;height:379px"></div>
<div class="gv" style="left:814px;top:216px;height:379px"></div>
<div class="gv" style="left:878px;top:216px;height:379px"></div>
<div class="gv" style="left:942px;top:216px;height:379px"></div>
<div class="gv" style="left:1006px;top:216px;height:379px"></div>
<div class="gv" style="left:1070px;top:216px;height:379px"></div>
<div class="gv" style="left:1134px;top:216px;height:379px"></div>
<div class="gv" style="left:1198px;top:216px;height:379px"></div>
<div class="gv" style="left:1262px;top:216px;height:379px"></div>
<div class="gv" style="left:1326px;top:216px;height:379px"></div>
<div class="gv" style="left:1390px;top:216px;height:379px"></div>
<div class="gv" style="left:1454px;top:216px;height:379px"></div>
<div class="gv" style="left:1518px;top:216px;height:379px"></div>
<div class="a" style="left:1577px;top:215px;width:1px;height:380px;background:#a0a0a0"></div>
<div class="t" style="left:27.50px;top:220.00px;font-size:13px;color:#000;font-weight:normal;transform:scaleX(1.0473);-webkit-text-stroke:0.25px #000;">Order Id</div>
<div class="t" style="left:139.50px;top:220.00px;font-size:13px;color:#000;font-weight:normal;transform:scaleX(1.0976);-webkit-text-stroke:0.25px #000;">Amount</div>
<div class="t" style="left:202.40px;top:220.00px;font-size:13px;color:#000;font-weight:normal;transform:scaleX(1.0954);-webkit-text-stroke:0.25px #000;">Payment Method</div>
<div class="t" style="left:318.50px;top:220.00px;font-size:13px;color:#000;font-weight:normal;transform:scaleX(1.0049);-webkit-text-stroke:0.25px #000;">City</div>
<div class="t" style="left:382.50px;top:220.00px;font-size:13px;color:#000;font-weight:normal;transform:scaleX(1.0347);-webkit-text-stroke:0.25px #000;">Customer</div>
<div class="t" style="left:446.50px;top:220.00px;font-size:13px;color:#000;font-weight:normal;transform:scaleX(1.0450);-webkit-text-stroke:0.25px #000;">Customer Phone</div>
<div class="t" style="left:557.50px;top:220.00px;font-size:13px;color:#000;font-weight:normal;transform:scaleX(1.0457);-webkit-text-stroke:0.25px #000;">Order Date</div>
<div class="t" style="left:689.50px;top:220.00px;font-size:13px;color:#000;font-weight:normal;transform:scaleX(1.0597);-webkit-text-stroke:0.25px #000;">Cancellation Time</div>
<div class="t" style="left:26.50px;top:240.00px;font-size:13px;color:#000;font-weight:normal;transform:scaleX(0.9958);-webkit-text-stroke:0.25px #000;">BS-Test-6954831</div>
<div class="t" style="left:170.50px;top:240.00px;font-size:13px;color:#000;font-weight:normal;transform:scaleX(0.9237);-webkit-text-stroke:0.25px #000;">7500</div>
<div class="t" style="left:203.50px;top:240.00px;font-size:13px;color:#000;font-weight:normal;transform:scaleX(1.0266);-webkit-text-stroke:0.25px #000;">Credit Card</div>
<div class="t" style="left:317.46px;top:240.00px;font-size:13px;color:#000;font-weight:normal;transform:scaleX(1.0370);-webkit-text-stroke:0.25px #000;">Lahore</div>
<div class="t" style="left:381.53px;top:240.00px;font-size:13px;color:#000;font-weight:normal;transform:scaleX(0.9671);-webkit-text-stroke:0.25px #000;">Hamza</div>
<div class="t" style="left:489.20px;top:240.00px;font-size:13px;color:#000;font-weight:normal;transform:scaleX(0.9531);-webkit-text-stroke:0.25px #000;">324344963</div>
<div class="t" style="left:557.50px;top:240.00px;font-size:13px;color:#000;font-weight:normal;transform:scaleX(0.9767);-webkit-text-stroke:0.25px #000;">2022-02-23T22:16:06</div>
<div class="t" style="left:689.50px;top:240.00px;font-size:13px;color:#000;font-weight:normal;transform:scaleX(0.9767);-webkit-text-stroke:0.25px #000;">2022-02-23T01:32:41</div>
<div class="t" style="left:26.50px;top:260.00px;font-size:13px;color:#000;font-weight:normal;transform:scaleX(0.9958);-webkit-text-stroke:0.25px #000;">BS-Test-6954831</div>
<div class="t" style="left:170.50px;top:260.00px;font-size:13px;color:#000;font-weight:normal;transform:scaleX(0.9237);-webkit-text-stroke:0.25px #000;">7500</div>
<div class="t" style="left:203.50px;top:260.00px;font-size:13px;color:#000;font-weight:normal;transform:scaleX(1.0266);-webkit-text-stroke:0.25px #000;">Credit Card</div>
<div class="t" style="left:317.46px;top:260.00px;font-size:13px;color:#000;font-weight:normal;transform:scaleX(1.0370);-webkit-text-stroke:0.25px #000;">Lahore</div>
<div class="t" style="left:381.53px;top:260.00px;font-size:13px;color:#000;font-weight:normal;transform:scaleX(0.9671);-webkit-text-stroke:0.25px #000;">Hamza</div>
<div class="t" style="left:489.20px;top:260.00px;font-size:13px;color:#000;font-weight:normal;transform:scaleX(0.9531);-webkit-text-stroke:0.25px #000;">324344963</div>
<div class="t" style="left:557.50px;top:260.00px;font-size:13px;color:#000;font-weight:normal;transform:scaleX(0.9767);-webkit-text-stroke:0.25px #000;">2022-02-23T22:16:06</div>
<div class="t" style="left:689.50px;top:260.00px;font-size:13px;color:#000;font-weight:normal;transform:scaleX(0.9767);-webkit-text-stroke:0.25px #000;">2022-02-23T01:32:41</div>
<div class="t" style="left:26.50px;top:280.00px;font-size:13px;color:#000;font-weight:normal;transform:scaleX(0.9958);-webkit-text-stroke:0.25px #000;">BS-Test-6954831</div>
<div class="t" style="left:170.50px;top:280.00px;font-size:13px;color:#000;font-weight:normal;transform:scaleX(0.9237);-webkit-text-stroke:0.25px #000;">7500</div>
<div class="t" style="left:203.50px;top:280.00px;font-size:13px;color:#000;font-weight:normal;transform:scaleX(1.0266);-webkit-text-stroke:0.25px #000;">Credit Card</div>
<div class="t" style="left:317.46px;top:280.00px;font-size:13px;color:#000;font-weight:normal;transform:scaleX(1.0370);-webkit-text-stroke:0.25px #000;">Lahore</div>
<div class="t" style="left:381.53px;top:280.00px;font-size:13px;color:#000;font-weight:normal;transform:scaleX(0.9671);-webkit-text-stroke:0.25px #000;">Hamza</div>
<div class="t" style="left:489.20px;top:280.00px;font-size:13px;color:#000;font-weight:normal;transform:scaleX(0.9531);-webkit-text-stroke:0.25px #000;">324344963</div>
<div class="t" style="left:557.50px;top:280.00px;font-size:13px;color:#000;font-weight:normal;transform:scaleX(0.9767);-webkit-text-stroke:0.25px #000;">2022-02-23T22:16:06</div>
<div class="t" style="left:689.50px;top:280.00px;font-size:13px;color:#000;font-weight:normal;transform:scaleX(0.9767);-webkit-text-stroke:0.25px #000;">2022-02-23T01:32:41</div>
<div class="t" style="left:26.50px;top:300.00px;font-size:13px;color:#000;font-weight:normal;transform:scaleX(0.9958);-webkit-text-stroke:0.25px #000;">BS-Test-6954831</div>
<div class="t" style="left:170.50px;top:300.00px;font-size:13px;color:#000;font-weight:normal;transform:scaleX(0.9237);-webkit-text-stroke:0.25px #000;">7500</div>
<div class="t" style="left:203.50px;top:300.00px;font-size:13px;color:#000;font-weight:normal;transform:scaleX(1.0266);-webkit-text-stroke:0.25px #000;">Credit Card</div>
<div class="t" style="left:317.46px;top:300.00px;font-size:13px;color:#000;font-weight:normal;transform:scaleX(1.0370);-webkit-text-stroke:0.25px #000;">Lahore</div>
<div class="t" style="left:381.53px;top:300.00px;font-size:13px;color:#000;font-weight:normal;transform:scaleX(0.9671);-webkit-text-stroke:0.25px #000;">Hamza</div>
<div class="t" style="left:489.20px;top:300.00px;font-size:13px;color:#000;font-weight:normal;transform:scaleX(0.9531);-webkit-text-stroke:0.25px #000;">324344963</div>
<div class="t" style="left:557.50px;top:300.00px;font-size:13px;color:#000;font-weight:normal;transform:scaleX(0.9767);-webkit-text-stroke:0.25px #000;">2022-02-23T22:16:06</div>
<div class="t" style="left:689.50px;top:300.00px;font-size:13px;color:#000;font-weight:normal;transform:scaleX(0.9767);-webkit-text-stroke:0.25px #000;">2022-02-23T01:32:41</div>
<div class="t" style="left:26.50px;top:320.00px;font-size:13px;color:#000;font-weight:normal;transform:scaleX(0.9958);-webkit-text-stroke:0.25px #000;">BS-Test-6954831</div>
<div class="t" style="left:170.50px;top:320.00px;font-size:13px;color:#000;font-weight:normal;transform:scaleX(0.9237);-webkit-text-stroke:0.25px #000;">7500</div>
<div class="t" style="left:203.50px;top:320.00px;font-size:13px;color:#000;font-weight:normal;transform:scaleX(1.0266);-webkit-text-stroke:0.25px #000;">Credit Card</div>
<div class="t" style="left:317.46px;top:320.00px;font-size:13px;color:#000;font-weight:normal;transform:scaleX(1.0370);-webkit-text-stroke:0.25px #000;">Lahore</div>
<div class="t" style="left:381.53px;top:320.00px;font-size:13px;color:#000;font-weight:normal;transform:scaleX(0.9671);-webkit-text-stroke:0.25px #000;">Hamza</div>
<div class="t" style="left:489.20px;top:320.00px;font-size:13px;color:#000;font-weight:normal;transform:scaleX(0.9531);-webkit-text-stroke:0.25px #000;">324344963</div>
<div class="t" style="left:557.50px;top:320.00px;font-size:13px;color:#000;font-weight:normal;transform:scaleX(0.9767);-webkit-text-stroke:0.25px #000;">2022-02-23T22:16:06</div>
<div class="t" style="left:689.50px;top:320.00px;font-size:13px;color:#000;font-weight:normal;transform:scaleX(0.9767);-webkit-text-stroke:0.25px #000;">2022-02-23T01:32:41</div>
<div class="t" style="left:26.50px;top:340.00px;font-size:13px;color:#000;font-weight:normal;transform:scaleX(0.9958);-webkit-text-stroke:0.25px #000;">BS-Test-3275185</div>
<div class="t" style="left:170.50px;top:340.00px;font-size:13px;color:#000;font-weight:normal;transform:scaleX(0.9237);-webkit-text-stroke:0.25px #000;">7500</div>
<div class="t" style="left:203.50px;top:340.00px;font-size:13px;color:#000;font-weight:normal;transform:scaleX(1.0266);-webkit-text-stroke:0.25px #000;">Credit Card</div>
<div class="t" style="left:317.46px;top:340.00px;font-size:13px;color:#000;font-weight:normal;transform:scaleX(1.0370);-webkit-text-stroke:0.25px #000;">Lahore</div>
<div class="t" style="left:381.53px;top:340.00px;font-size:13px;color:#000;font-weight:normal;transform:scaleX(0.9671);-webkit-text-stroke:0.25px #000;">Hamza</div>
<div class="t" style="left:489.20px;top:340.00px;font-size:13px;color:#000;font-weight:normal;transform:scaleX(0.9531);-webkit-text-stroke:0.25px #000;">324344963</div>
<div class="t" style="left:557.50px;top:340.00px;font-size:13px;color:#000;font-weight:normal;transform:scaleX(0.9767);-webkit-text-stroke:0.25px #000;">2022-02-23T22:16:06</div>
<div class="t" style="left:689.50px;top:340.00px;font-size:13px;color:#000;font-weight:normal;transform:scaleX(0.9767);-webkit-text-stroke:0.25px #000;">2022-02-23T15:03:19</div>
<div class="t" style="left:26.51px;top:360.00px;font-size:13px;color:#000;font-weight:normal;transform:scaleX(0.9929);-webkit-text-stroke:0.25px #000;">BS-M-8344664</div>
<div class="t" style="left:170.50px;top:360.00px;font-size:13px;color:#000;font-weight:normal;transform:scaleX(0.9237);-webkit-text-stroke:0.25px #000;">7500</div>
<div class="t" style="left:203.50px;top:360.00px;font-size:13px;color:#000;font-weight:normal;transform:scaleX(1.0266);-webkit-text-stroke:0.25px #000;">Credit Card</div>
<div class="t" style="left:318.50px;top:360.00px;font-size:13px;color:#000;font-weight:normal;transform:scaleX(1.0840);-webkit-text-stroke:0.25px #000;">Attock</div>
<div class="t" style="left:381.57px;top:360.00px;font-size:13px;color:#000;font-weight:normal;transform:scaleX(0.9286);-webkit-text-stroke:0.25px #000;">RT</div>
<div class="t" style="left:482.00px;top:360.00px;font-size:13px;color:#000;font-weight:normal;transform:scaleX(0.9574);-webkit-text-stroke:0.25px #000;">3224141086</div>
<div class="t" style="left:557.50px;top:360.00px;font-size:13px;color:#000;font-weight:normal;transform:scaleX(0.9767);-webkit-text-stroke:0.25px #000;">2022-02-16T22:16:06</div>
<div class="t" style="left:689.50px;top:360.00px;font-size:13px;color:#000;font-weight:normal;transform:scaleX(0.9767);-webkit-text-stroke:0.25px #000;">2022-02-17T13:05:42</div>
<div class="t" style="left:26.51px;top:380.00px;font-size:13px;color:#000;font-weight:normal;transform:scaleX(0.9929);-webkit-text-stroke:0.25px #000;">BS-M-8344664</div>
<div class="t" style="left:170.50px;top:380.00px;font-size:13px;color:#000;font-weight:normal;transform:scaleX(0.9237);-webkit-text-stroke:0.25px #000;">7500</div>
<div class="t" style="left:203.50px;top:380.00px;font-size:13px;color:#000;font-weight:normal;transform:scaleX(1.0266);-webkit-text-stroke:0.25px #000;">Credit Card</div>
<div class="t" style="left:318.50px;top:380.00px;font-size:13px;color:#000;font-weight:normal;transform:scaleX(1.0840);-webkit-text-stroke:0.25px #000;">Attock</div>
<div class="t" style="left:381.57px;top:380.00px;font-size:13px;color:#000;font-weight:normal;transform:scaleX(0.9286);-webkit-text-stroke:0.25px #000;">RT</div>
<div class="t" style="left:482.00px;top:380.00px;font-size:13px;color:#000;font-weight:normal;transform:scaleX(0.9574);-webkit-text-stroke:0.25px #000;">3224141086</div>
<div class="t" style="left:557.50px;top:380.00px;font-size:13px;color:#000;font-weight:normal;transform:scaleX(0.9767);-webkit-text-stroke:0.25px #000;">2022-02-16T22:16:06</div>
<div class="t" style="left:689.50px;top:380.00px;font-size:13px;color:#000;font-weight:normal;transform:scaleX(0.9767);-webkit-text-stroke:0.25px #000;">2022-02-17T13:05:42</div>
<div class="t" style="left:26.51px;top:400.00px;font-size:13px;color:#000;font-weight:normal;transform:scaleX(0.9929);-webkit-text-stroke:0.25px #000;">BS-M-8344664</div>
<div class="t" style="left:170.50px;top:400.00px;font-size:13px;color:#000;font-weight:normal;transform:scaleX(0.9237);-webkit-text-stroke:0.25px #000;">7500</div>
<div class="t" style="left:203.50px;top:400.00px;font-size:13px;color:#000;font-weight:normal;transform:scaleX(1.0266);-webkit-text-stroke:0.25px #000;">Credit Card</div>
<div class="t" style="left:318.50px;top:400.00px;font-size:13px;color:#000;font-weight:normal;transform:scaleX(1.0840);-webkit-text-stroke:0.25px #000;">Attock</div>
<div class="t" style="left:381.57px;top:400.00px;font-size:13px;color:#000;font-weight:normal;transform:scaleX(0.9286);-webkit-text-stroke:0.25px #000;">RT</div>
<div class="t" style="left:482.00px;top:400.00px;font-size:13px;color:#000;font-weight:normal;transform:scaleX(0.9574);-webkit-text-stroke:0.25px #000;">3224141086</div>
<div class="t" style="left:557.50px;top:400.00px;font-size:13px;color:#000;font-weight:normal;transform:scaleX(0.9767);-webkit-text-stroke:0.25px #000;">2022-02-16T22:16:06</div>
<div class="t" style="left:689.50px;top:400.00px;font-size:13px;color:#000;font-weight:normal;transform:scaleX(0.9767);-webkit-text-stroke:0.25px #000;">2022-02-17T13:05:42</div>
<div class="t" style="left:26.51px;top:420.00px;font-size:13px;color:#000;font-weight:normal;transform:scaleX(0.9929);-webkit-text-stroke:0.25px #000;">BS-M-8344664</div>
<div class="t" style="left:170.50px;top:420.00px;font-size:13px;color:#000;font-weight:normal;transform:scaleX(0.9237);-webkit-text-stroke:0.25px #000;">7500</div>
<div class="t" style="left:203.50px;top:420.00px;font-size:13px;color:#000;font-weight:normal;transform:scaleX(1.0266);-webkit-text-stroke:0.25px #000;">Credit Card</div>
<div class="t" style="left:318.50px;top:420.00px;font-size:13px;color:#000;font-weight:normal;transform:scaleX(1.0840);-webkit-text-stroke:0.25px #000;">Attock</div>
<div class="t" style="left:381.57px;top:420.00px;font-size:13px;color:#000;font-weight:normal;transform:scaleX(0.9286);-webkit-text-stroke:0.25px #000;">RT</div>
<div class="t" style="left:482.00px;top:420.00px;font-size:13px;color:#000;font-weight:normal;transform:scaleX(0.9574);-webkit-text-stroke:0.25px #000;">3224141086</div>
<div class="t" style="left:557.50px;top:420.00px;font-size:13px;color:#000;font-weight:normal;transform:scaleX(0.9767);-webkit-text-stroke:0.25px #000;">2022-02-16T22:16:06</div>
<div class="t" style="left:689.50px;top:420.00px;font-size:13px;color:#000;font-weight:normal;transform:scaleX(0.9767);-webkit-text-stroke:0.25px #000;">2022-02-17T13:05:42</div>
<div class="t" style="left:26.45px;top:440.00px;font-size:13px;color:#000;font-weight:normal;transform:scaleX(1.0464);-webkit-text-stroke:0.25px #000;">MF-Test-4211157</div>
<div class="t" style="left:170.50px;top:440.00px;font-size:13px;color:#000;font-weight:normal;transform:scaleX(0.9237);-webkit-text-stroke:0.25px #000;">7500</div>
<div class="t" style="left:203.50px;top:440.00px;font-size:13px;color:#000;font-weight:normal;transform:scaleX(1.0266);-webkit-text-stroke:0.25px #000;">Credit Card</div>
<div class="t" style="left:317.46px;top:440.00px;font-size:13px;color:#000;font-weight:normal;transform:scaleX(1.0370);-webkit-text-stroke:0.25px #000;">Lahore</div>
<div class="t" style="left:381.53px;top:440.00px;font-size:13px;color:#000;font-weight:normal;transform:scaleX(0.9671);-webkit-text-stroke:0.25px #000;">Hamza</div>
<div class="t" style="left:489.20px;top:440.00px;font-size:13px;color:#000;font-weight:normal;transform:scaleX(0.9531);-webkit-text-stroke:0.25px #000;">324344963</div>
<div class="t" style="left:557.50px;top:440.00px;font-size:13px;color:#000;font-weight:normal;transform:scaleX(0.9767);-webkit-text-stroke:0.25px #000;">2022-02-14T22:16:06</div>
<div class="t" style="left:689.50px;top:440.00px;font-size:13px;color:#000;font-weight:normal;transform:scaleX(0.9767);-webkit-text-stroke:0.25px #000;">2022-02-14T11:11:36</div>
<div class="t" style="left:26.50px;top:460.00px;font-size:13px;color:#000;font-weight:normal;transform:scaleX(0.9958);-webkit-text-stroke:0.25px #000;">BS-Test-2932733</div>
<div class="t" style="left:170.50px;top:460.00px;font-size:13px;color:#000;font-weight:normal;transform:scaleX(0.9237);-webkit-text-stroke:0.25px #000;">7500</div>
<div class="t" style="left:203.50px;top:460.00px;font-size:13px;color:#000;font-weight:normal;transform:scaleX(1.0266);-webkit-text-stroke:0.25px #000;">Credit Card</div>
<div class="t" style="left:317.46px;top:460.00px;font-size:13px;color:#000;font-weight:normal;transform:scaleX(1.0370);-webkit-text-stroke:0.25px #000;">Lahore</div>
<div class="t" style="left:381.53px;top:460.00px;font-size:13px;color:#000;font-weight:normal;transform:scaleX(0.9671);-webkit-text-stroke:0.25px #000;">Hamza</div>
<div class="t" style="left:489.20px;top:460.00px;font-size:13px;color:#000;font-weight:normal;transform:scaleX(0.9531);-webkit-text-stroke:0.25px #000;">324344963</div>
<div class="t" style="left:557.50px;top:460.00px;font-size:13px;color:#000;font-weight:normal;transform:scaleX(0.9767);-webkit-text-stroke:0.25px #000;">2022-02-14T22:16:06</div>
<div class="t" style="left:689.50px;top:460.00px;font-size:13px;color:#000;font-weight:normal;transform:scaleX(0.9767);-webkit-text-stroke:0.25px #000;">2022-02-14T11:18:50</div>
<div class="t" style="left:26.50px;top:480.00px;font-size:13px;color:#000;font-weight:normal;transform:scaleX(0.9958);-webkit-text-stroke:0.25px #000;">MF-Test-2618162</div>
<div class="t" style="left:170.50px;top:480.00px;font-size:13px;color:#000;font-weight:normal;transform:scaleX(0.9237);-webkit-text-stroke:0.25px #000;">7500</div>
<div class="t" style="left:203.50px;top:480.00px;font-size:13px;color:#000;font-weight:normal;transform:scaleX(1.0266);-webkit-text-stroke:0.25px #000;">Credit Card</div>
<div class="t" style="left:317.46px;top:480.00px;font-size:13px;color:#000;font-weight:normal;transform:scaleX(1.0370);-webkit-text-stroke:0.25px #000;">Lahore</div>
<div class="t" style="left:381.53px;top:480.00px;font-size:13px;color:#000;font-weight:normal;transform:scaleX(0.9671);-webkit-text-stroke:0.25px #000;">Hamza</div>
<div class="t" style="left:489.20px;top:480.00px;font-size:13px;color:#000;font-weight:normal;transform:scaleX(0.9531);-webkit-text-stroke:0.25px #000;">324344963</div>
<div class="t" style="left:557.50px;top:480.00px;font-size:13px;color:#000;font-weight:normal;transform:scaleX(0.9767);-webkit-text-stroke:0.25px #000;">2022-02-11T22:16:06</div>
<div class="t" style="left:689.50px;top:480.00px;font-size:13px;color:#000;font-weight:normal;transform:scaleX(0.9767);-webkit-text-stroke:0.25px #000;">2022-02-11T16:55:27</div>
<div class="t" style="left:26.50px;top:500.00px;font-size:13px;color:#000;font-weight:normal;transform:scaleX(0.9958);-webkit-text-stroke:0.25px #000;">MF-Test-5836618</div>
<div class="t" style="left:170.50px;top:500.00px;font-size:13px;color:#000;font-weight:normal;transform:scaleX(0.9237);-webkit-text-stroke:0.25px #000;">7500</div>
<div class="t" style="left:203.50px;top:500.00px;font-size:13px;color:#000;font-weight:normal;transform:scaleX(1.0266);-webkit-text-stroke:0.25px #000;">Credit Card</div>
<div class="t" style="left:317.46px;top:500.00px;font-size:13px;color:#000;font-weight:normal;transform:scaleX(1.0370);-webkit-text-stroke:0.25px #000;">Lahore</div>
<div class="t" style="left:381.53px;top:500.00px;font-size:13px;color:#000;font-weight:normal;transform:scaleX(0.9671);-webkit-text-stroke:0.25px #000;">Hamza</div>
<div class="t" style="left:489.20px;top:500.00px;font-size:13px;color:#000;font-weight:normal;transform:scaleX(0.9531);-webkit-text-stroke:0.25px #000;">324344963</div>
<div class="t" style="left:557.50px;top:500.00px;font-size:13px;color:#000;font-weight:normal;transform:scaleX(0.9767);-webkit-text-stroke:0.25px #000;">2022-02-10T22:16:06</div>
<div class="t" style="left:689.50px;top:500.00px;font-size:13px;color:#000;font-weight:normal;transform:scaleX(0.9767);-webkit-text-stroke:0.25px #000;">2022-02-10T13:40:19</div>
<div class="t" style="left:26.51px;top:520.00px;font-size:13px;color:#000;font-weight:normal;transform:scaleX(0.9929);-webkit-text-stroke:0.25px #000;">BS-M-8188606</div>
<div class="t" style="left:170.50px;top:520.00px;font-size:13px;color:#000;font-weight:normal;transform:scaleX(0.9237);-webkit-text-stroke:0.25px #000;">7500</div>
<div class="t" style="left:203.50px;top:520.00px;font-size:13px;color:#000;font-weight:normal;transform:scaleX(1.0266);-webkit-text-stroke:0.25px #000;">Credit Card</div>
<div class="t" style="left:318.50px;top:520.00px;font-size:13px;color:#000;font-weight:normal;transform:scaleX(1.0840);-webkit-text-stroke:0.25px #000;">Attock</div>
<div class="t" style="left:381.57px;top:520.00px;font-size:13px;color:#000;font-weight:normal;transform:scaleX(0.9286);-webkit-text-stroke:0.25px #000;">RT</div>
<div class="t" style="left:482.00px;top:520.00px;font-size:13px;color:#000;font-weight:normal;transform:scaleX(0.9574);-webkit-text-stroke:0.25px #000;">3224141086</div>
<div class="t" style="left:557.50px;top:520.00px;font-size:13px;color:#000;font-weight:normal;transform:scaleX(0.9767);-webkit-text-stroke:0.25px #000;">2022-02-10T22:16:06</div>
<div class="t" style="left:689.50px;top:520.00px;font-size:13px;color:#000;font-weight:normal;transform:scaleX(0.9767);-webkit-text-stroke:0.25px #000;">2022-02-10T13:28:45</div>
<div class="t" style="left:26.51px;top:540.00px;font-size:13px;color:#000;font-weight:normal;transform:scaleX(0.9929);-webkit-text-stroke:0.25px #000;">BS-M-8188606</div>
<div class="t" style="left:170.50px;top:540.00px;font-size:13px;color:#000;font-weight:normal;transform:scaleX(0.9237);-webkit-text-stroke:0.25px #000;">7500</div>
<div class="t" style="left:203.50px;top:540.00px;font-size:13px;color:#000;font-weight:normal;transform:scaleX(1.0266);-webkit-text-stroke:0.25px #000;">Credit Card</div>
<div class="t" style="left:318.50px;top:540.00px;font-size:13px;color:#000;font-weight:normal;transform:scaleX(1.0840);-webkit-text-stroke:0.25px #000;">Attock</div>
<div class="t" style="left:381.57px;top:540.00px;font-size:13px;color:#000;font-weight:normal;transform:scaleX(0.9286);-webkit-text-stroke:0.25px #000;">RT</div>
<div class="t" style="left:482.00px;top:540.00px;font-size:13px;color:#000;font-weight:normal;transform:scaleX(0.9574);-webkit-text-stroke:0.25px #000;">3224141086</div>
<div class="t" style="left:557.50px;top:540.00px;font-size:13px;color:#000;font-weight:normal;transform:scaleX(0.9767);-webkit-text-stroke:0.25px #000;">2022-02-10T22:16:06</div>
<div class="t" style="left:689.50px;top:540.00px;font-size:13px;color:#000;font-weight:normal;transform:scaleX(0.9767);-webkit-text-stroke:0.25px #000;">2022-02-10T13:28:45</div>
<div class="t" style="left:26.51px;top:560.00px;font-size:13px;color:#000;font-weight:normal;transform:scaleX(0.9929);-webkit-text-stroke:0.25px #000;">BS-M-8188606</div>
<div class="t" style="left:170.50px;top:560.00px;font-size:13px;color:#000;font-weight:normal;transform:scaleX(0.9237);-webkit-text-stroke:0.25px #000;">7500</div>
<div class="t" style="left:203.50px;top:560.00px;font-size:13px;color:#000;font-weight:normal;transform:scaleX(1.0266);-webkit-text-stroke:0.25px #000;">Credit Card</div>
<div class="t" style="left:318.50px;top:560.00px;font-size:13px;color:#000;font-weight:normal;transform:scaleX(1.0840);-webkit-text-stroke:0.25px #000;">Attock</div>
<div class="t" style="left:381.57px;top:560.00px;font-size:13px;color:#000;font-weight:normal;transform:scaleX(0.9286);-webkit-text-stroke:0.25px #000;">RT</div>
<div class="t" style="left:482.00px;top:560.00px;font-size:13px;color:#000;font-weight:normal;transform:scaleX(0.9574);-webkit-text-stroke:0.25px #000;">3224141086</div>
<div class="t" style="left:557.50px;top:560.00px;font-size:13px;color:#000;font-weight:normal;transform:scaleX(0.9767);-webkit-text-stroke:0.25px #000;">2022-02-10T22:16:06</div>
<div class="t" style="left:689.50px;top:560.00px;font-size:13px;color:#000;font-weight:normal;transform:scaleX(0.9767);-webkit-text-stroke:0.25px #000;">2022-02-10T13:28:45</div>
<div class="t" style="left:26.51px;top:580.00px;font-size:13px;color:#000;font-weight:normal;transform:scaleX(0.9929);-webkit-text-stroke:0.25px #000;">BS-M-8188606</div>
<div class="t" style="left:170.50px;top:580.00px;font-size:13px;color:#000;font-weight:normal;transform:scaleX(0.9237);-webkit-text-stroke:0.25px #000;">7500</div>
<div class="t" style="left:203.50px;top:580.00px;font-size:13px;color:#000;font-weight:normal;transform:scaleX(1.0266);-webkit-text-stroke:0.25px #000;">Credit Card</div>
<div class="t" style="left:318.50px;top:580.00px;font-size:13px;color:#000;font-weight:normal;transform:scaleX(1.0840);-webkit-text-stroke:0.25px #000;">Attock</div>
<div class="t" style="left:381.57px;top:580.00px;font-size:13px;color:#000;font-weight:normal;transform:scaleX(0.9286);-webkit-text-stroke:0.25px #000;">RT</div>
<div class="t" style="left:482.00px;top:580.00px;font-size:13px;color:#000;font-weight:normal;transform:scaleX(0.9574);-webkit-text-stroke:0.25px #000;">3224141086</div>
<div class="t" style="left:557.50px;top:580.00px;font-size:13px;color:#000;font-weight:normal;transform:scaleX(0.9767);-webkit-text-stroke:0.25px #000;">2022-02-10T22:16:06</div>
<div class="t" style="left:689.50px;top:580.00px;font-size:13px;color:#000;font-weight:normal;transform:scaleX(0.9767);-webkit-text-stroke:0.25px #000;">2022-02-10T13:28:45</div>
<div class="a" style="left:23px;top:214px;width:115px;height:23px;border:2px solid #217346"></div>
<div class="a" style="left:132px;top:233px;width:8px;height:6px;background:#fff"></div>
<div class="a" style="left:134px;top:233px;width:5px;height:5px;background:#217346"></div>
<div class="a" style="left:1578px;top:196px;width:20px;height:399px;background:#e6e6e6"></div>
<div class="a" style="left:1581px;top:198px;width:15px;height:420px;background:#fff;border:1px solid #a6a6a6"></div>
<div class="a" style="left:1581px;top:212px;width:15px;height:2px;background:#a6a6a6"></div>
<svg class="a" style="left:1581px;top:198px" width="15" height="14"><path d="M3.5 9h8l-4-4z" fill="#6d6d6d"/></svg>
<div class="a" style="left:668px;top:1px;width:259px;height:30px;border:4px solid #fdbb00;filter:drop-shadow(1.5px 1.5px 0.8px rgba(0,0,16,.75)) drop-shadow(1.5px 1.5px 1.6px rgba(0,0,0,.6))"></div>
<div class="a" style="left:197px;top:188px;width:118px;height:409px;border:4px solid #fdbb00;filter:drop-shadow(1.5px 1.5px 0.8px rgba(0,0,16,.75)) drop-shadow(1.5px 1.5px 1.6px rgba(0,0,0,.6))"></div>
<div class="a" style="left:683px;top:183px;width:137px;height:420px;border:4px solid #fdbb00;filter:drop-shadow(1.5px 1.5px 0.8px rgba(0,0,16,.75)) drop-shadow(1.5px 1.5px 1.6px rgba(0,0,0,.6))"></div></body></html>
